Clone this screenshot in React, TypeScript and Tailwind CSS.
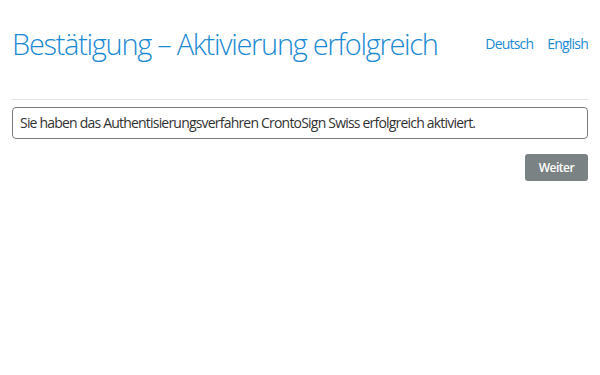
export default function App() {
  return (
    <div className="min-h-[375px] w-[600px] bg-white px-3 text-[#333]" style={{ fontFamily: '"Open Sans", sans-serif' }}>
      <div className="flex items-start justify-between pt-[24px]">
        <h1 className="whitespace-nowrap text-[29px] font-light leading-[40px] tracking-[-1.3px] text-[#1b8ad3]">Bestätigung – Aktivierung erfolgreich</h1>
        <div className="mt-[10px] flex gap-[14px] text-[14px] leading-[20px] tracking-[-0.8px] text-[#1b8ad3]">
          <span>Deutsch</span>
          <span>English</span>
        </div>
      </div>
      <div className="mt-[35px] border-t border-[#e3e3e3]" />
      <div className="mt-[7px] rounded-[4px] border border-[#7a7a7a] px-[7px] py-[5px] text-[14px] leading-[20px] tracking-[-0.8px]">
        Sie haben das Authentisierungsverfahren CrontoSign Swiss erfolgreich aktiviert.
      </div>
      <div className="mt-[15px] flex justify-end">
        <button className="h-[27px] w-[63px] rounded-[3px] bg-[#7b8283] text-[12px] font-semibold tracking-[-0.5px] text-white">Weiter</button>
      </div>
    </div>
  );
}
